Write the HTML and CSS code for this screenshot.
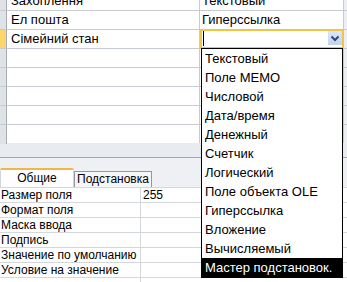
FILE: index.html
```html
<!DOCTYPE html>
<html lang="uk">
<head>
  <meta charset="UTF-8">
  <title>Конструктор таблиці</title>
  <link rel="stylesheet" href="styles.css">
</head>
<body>
  <div class="design-grid">
    <div class="row first">
      <div class="selector"></div>
      <div class="cell name">Захоплення</div>
      <div class="cell type">Текстовый</div>
      <div class="edge"></div>
    </div>
    <div class="row">
      <div class="selector"></div>
      <div class="cell name">Ел пошта</div>
      <div class="cell type">Гиперссылка</div>
      <div class="edge"></div>
    </div>
    <div class="row current">
      <div class="selector"></div>
      <div class="cell name">Сімейний стан</div>
      <div class="cell type active">
        <div class="focus">
          <span class="caret"></span>
          <span class="drop-btn">
            <svg width="14" height="14" viewBox="0 0 14 14">
              <path d="M3.5 5.5 L7 9 L10.5 5.5" fill="none" stroke="#2c4a7a" stroke-width="2"/>
            </svg>
          </span>
        </div>
        <ul class="type-list">
          <li>Текстовый</li>
          <li>Поле МЕМО</li>
          <li>Числовой</li>
          <li>Дата/время</li>
          <li>Денежный</li>
          <li>Счетчик</li>
          <li>Логический</li>
          <li>Поле объекта OLE</li>
          <li>Гиперссылка</li>
          <li>Вложение</li>
          <li>Вычисляемый</li>
          <li class="selected">Мастер подстановок.</li>
        </ul>
      </div>
      <div class="edge"></div>
    </div>
    <div class="row"><div class="selector"></div><div class="cell name"></div><div class="cell type"></div><div class="edge"></div></div>
    <div class="row"><div class="selector"></div><div class="cell name"></div><div class="cell type"></div><div class="edge"></div></div>
    <div class="row"><div class="selector"></div><div class="cell name"></div><div class="cell type"></div><div class="edge"></div></div>
    <div class="row"><div class="selector"></div><div class="cell name"></div><div class="cell type"></div><div class="edge"></div></div>
    <div class="row last"><div class="selector"></div><div class="cell name"></div><div class="cell type"></div><div class="edge"></div></div>
  </div>

  <div class="splitter"></div>

  <div class="tab-strip">
    <div class="tab active">Общие</div>
    <div class="tab">Подстановка</div>
  </div>

  <div class="props">
    <div class="prop"><div class="label">Размер поля</div><div class="value">255</div></div>
    <div class="prop"><div class="label">Формат поля</div><div class="value"></div></div>
    <div class="prop"><div class="label">Маска ввода</div><div class="value"></div></div>
    <div class="prop"><div class="label">Подпись</div><div class="value"></div></div>
    <div class="prop"><div class="label">Значение по умолчанию</div><div class="value"></div></div>
    <div class="prop"><div class="label">Условие на значение</div><div class="value"></div></div>
    <div class="prop"><div class="label"></div><div class="value"></div></div>
  </div>
</body>
</html>
```

FILE: styles.css
```css
body {
  margin: 0;
  width: 347px;
  height: 282px;
  overflow: hidden;
  background-color: #ffffff;
  font-family: "Liberation Sans", Arial, sans-serif;
  color: #000000;
}

.design-grid {
  height: 151px;
  margin-top: -8px;
}

.row {
  display: grid;
  grid-template-columns: 7px 193px 144px 1fr;
  height: 19px;
}

.row .selector {
  background-color: #dfe3e8;
  border-right: 1px solid #a7acb3;
  border-bottom: 1px solid #c6cbd3;
}

.row.current .selector {
  background-color: #fbd76b;
}

.row .cell {
  height: 18px;
  line-height: 18px;
  font-size: 13px;
  border-right: 1px solid #c6cbd3;
  border-bottom: 1px solid #c6cbd3;
  white-space: nowrap;
  overflow: hidden;
}

.row .name {
  padding-left: 4px;
}

.row .type {
  padding-left: 2px;
}

.row .edge {
  background-color: #eceef2;
  border-bottom: 1px solid #c6cbd3;
}

.row.last .cell,
.row.last .selector,
.row.last .edge {
  border-bottom: none;
}

.row .type.active {
  position: relative;
  overflow: visible;
}

.row .type.active .focus {
  position: absolute;
  top: -1px;
  left: 0;
  right: -1px;
  bottom: -1px;
  border: 2px solid #f2c446;
  background-color: #ffffff;
}

.row .type.active .caret {
  position: absolute;
  left: 1px;
  top: 0;
  width: 1px;
  height: 15px;
  background-color: #000000;
}

.row .type.active .drop-btn {
  position: absolute;
  right: 0;
  top: 0;
  width: 14px;
  height: 14px;
  background: linear-gradient(#dbe6f8, #c3d3ef);
  display: flex;
}

.type-list {
  position: absolute;
  z-index: 2;
  top: 18px;
  left: 1px;
  width: 142px;
  box-sizing: border-box;
  margin: 0;
  padding: 0;
  list-style: none;
  background-color: #ffffff;
  border: 1px solid #000000;
}

.type-list li {
  height: 19px;
  line-height: 19px;
  padding-left: 3px;
  font-size: 13px;
  color: #000000;
  white-space: nowrap;
}

.type-list li.selected {
  background-color: #000000;
  color: #ffffff;
}

.splitter {
  height: 14px;
  background-color: #e8ebf0;
  border-bottom: 1px solid #a2a6ac;
}

.tab-strip {
  display: flex;
  align-items: flex-end;
  height: 29px;
  background-color: #eef0f3;
}

.tab {
  height: 15px;
  line-height: 15px;
  padding: 0 2px;
  font-size: 12px;
  background-color: #f6f6f6;
  border: 1px solid #8e98a4;
  border-bottom: none;
}

.tab.active {
  width: 72px;
  height: 17px;
  line-height: 17px;
  padding: 0;
  text-align: center;
  background-color: #ffffff;
  border: 1px solid #d2d6dc;
  border-top: 2px solid #f0b64a;
  border-bottom: none;
  border-radius: 2px 2px 0 0;
}

.props {
  background-color: #ffffff;
  border-top: 1px solid #d4d7dc;
}

.prop {
  display: grid;
  grid-template-columns: 141px 1fr;
  height: 14px;
  border-bottom: 1px solid #d4d7dc;
}

.prop .label,
.prop .value {
  line-height: 14px;
  font-size: 12px;
  padding-left: 1px;
  white-space: nowrap;
  overflow: hidden;
}

.prop .label {
  border-right: 1px solid #d4d7dc;
}

.prop .value {
  padding-left: 2px;
}
```
